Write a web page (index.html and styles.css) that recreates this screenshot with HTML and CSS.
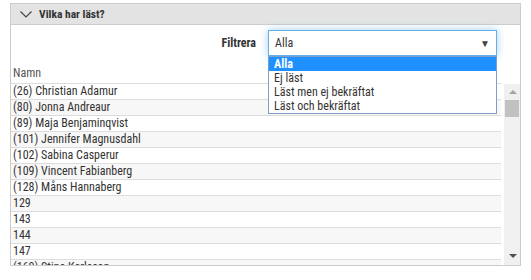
FILE: index.html
```html
<!DOCTYPE html>
<html lang="sv">
<head>
    <meta charset="UTF-8">
    <meta name="viewport" content="width=device-width, initial-scale=1.0">
    <title>Vilka har läst?</title>
    <link rel="stylesheet" href="styles.css">
</head>
<body>
    <div class="panel">
        <div class="panel-head">
            <svg class="chevron" width="12" height="7" viewBox="0 0 12 7">
                <polyline points="0.5,0.5 6,6 11.5,0.5" fill="none" stroke="#444" stroke-width="1.2"/>
            </svg>
            <span class="panel-title">Vilka har läst?</span>
        </div>

        <div class="panel-body">
            <div class="filter-row">
                <label class="filter-label">Filtrera</label>
                <div class="select">
                    <span class="select-value">Alla</span>
                    <span class="select-arrow">&#9660;</span>
                    <ul class="select-list">
                        <li class="selected">Alla</li>
                        <li>Ej läst</li>
                        <li>Läst men ej bekräftat</li>
                        <li>Läst och bekräftat</li>
                    </ul>
                </div>
            </div>

            <div class="table-head">Namn</div>

            <div class="table-wrap">
                <div class="rows">
                    <div class="row">(26) Christian Adamur</div>
                    <div class="row">(80) Jonna Andreaur</div>
                    <div class="row">(89) Maja Benjaminqvist</div>
                    <div class="row">(101) Jennifer Magnusdahl</div>
                    <div class="row">(102) Sabina Casperur</div>
                    <div class="row">(109) Vincent Fabianberg</div>
                    <div class="row">(128) Måns Hannaberg</div>
                    <div class="row">129</div>
                    <div class="row">143</div>
                    <div class="row">144</div>
                    <div class="row">147</div>
                    <div class="row">(160) Stina Karlsson</div>
                </div>
                <div class="scrollbar">
                    <span class="scroll-up"></span>
                    <span class="scroll-thumb"></span>
                    <span class="scroll-down"></span>
                </div>
            </div>
        </div>
    </div>
</body>
</html>
```

FILE: styles.css
```css
body {
    margin: 0;
    font-family: "Liberation Sans Narrow", "Roboto Condensed", Roboto, sans-serif;
    font-size: 12px;
    color: #333;
    background-color: white;
}
.panel {
    margin: 3px 0 0 10px;
    width: 509px;
    border: 1px solid #ccc;
}
.panel-head {
    height: 20px;
    background-color: #e3e3e3;
    border-bottom: 1px solid #ccc;
    display: flex;
    align-items: center;
    padding-left: 9px;
}
.chevron {
    margin-right: 7px;
}
.panel-title {
    font-weight: bold;
    font-size: 11.5px;
}
.filter-row {
    display: flex;
    align-items: center;
    padding-top: 5px;
    height: 26px;
}
.filter-label {
    font-weight: bold;
    width: 245px;
    text-align: right;
    margin-right: 12px;
}
.select {
    position: relative;
    width: 229px;
    height: 26px;
    border: 1px solid #66afe9;
    box-shadow: 0 0 8px rgba(102, 175, 233, 0.6);
    display: flex;
    align-items: center;
    padding: 0 6px;
    box-sizing: border-box;
}
.select-value {
    flex: 1;
    font-size: 12px;
    color: #333;
}
.select-arrow {
    font-size: 10px;
    color: #444;
    margin-right: 0;
}
.select-list {
    position: absolute;
    top: 25px;
    left: -1px;
    width: 229px;
    margin: 0;
    padding: 0;
    list-style: none;
    border: 1px solid #7f9dc9;
    background-color: white;
    box-sizing: border-box;
    z-index: 2;
}
.select-list li {
    height: 14px;
    line-height: 14px;
    padding-left: 5px;
    color: #333;
}
.select-list li.selected {
    background-color: #1e90ff;
    color: white;
    font-weight: bold;
}
.table-head {
    height: 28px;
    box-sizing: border-box;
    padding: 10px 0 0 2px;
    width: 490px;
    border-bottom: 1px solid #ddd;
    color: #555;
}
.table-wrap {
    display: flex;
    gap: 3px;
    height: 181px;
    overflow: hidden;
}
.rows {
    width: 490px;
}
.row {
    height: 15px;
    line-height: 15px;
    padding-left: 2px;
    border-bottom: 1px solid #ddd;
}
.row:nth-child(even) {
    background-color: #f7f7f7;
}
.scrollbar {
    width: 16px;
    background-color: #f0f0f0;
    position: relative;
}
.scroll-thumb {
    position: absolute;
    top: 16px;
    left: 1px;
    width: 14px;
    height: 17px;
    background-color: #c1c1c1;
}
.scroll-up,
.scroll-down {
    position: absolute;
    left: 5px;
    width: 0;
    height: 0;
    border-left: 4px solid transparent;
    border-right: 4px solid transparent;
}
.scroll-up {
    top: 6px;
    border-bottom: 4px solid #a3a3a3;
}
.scroll-down {
    bottom: 7px;
    border-top: 4px solid #505050;
}
```
